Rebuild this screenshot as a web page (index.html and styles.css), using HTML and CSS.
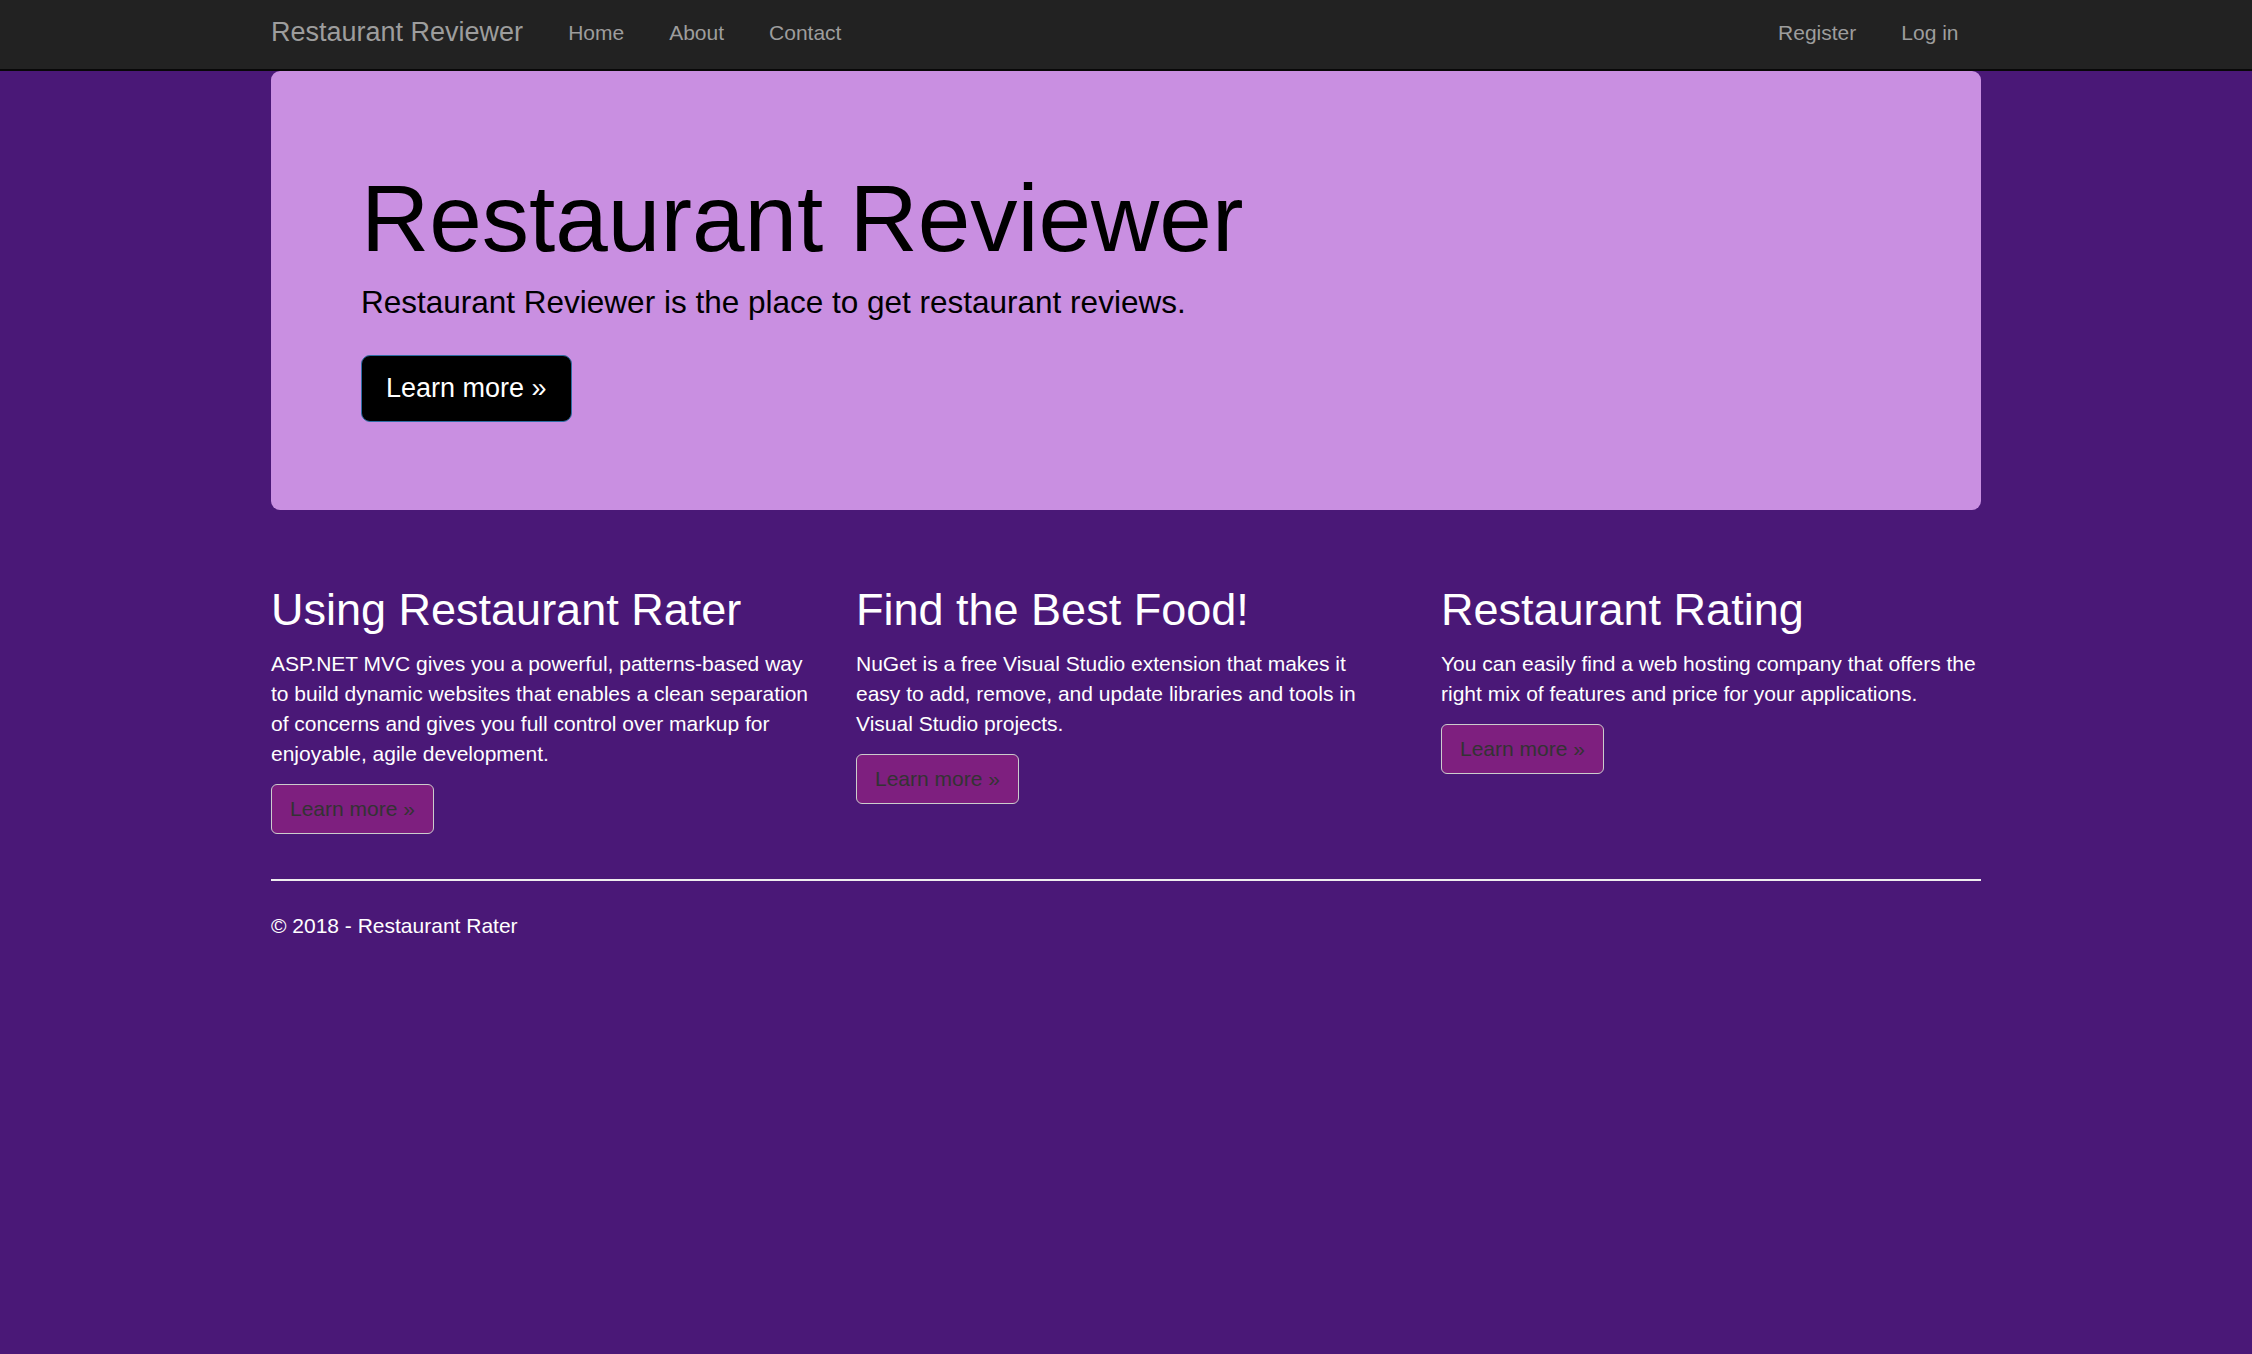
FILE: index.html
```html
<!DOCTYPE html>
<html lang="en">
<head>
<meta charset="utf-8">
<title>Home Page - Restaurant Reviewer</title>
<link rel="stylesheet" href="styles.css">
</head>
<body>
<nav class="navbar">
  <div class="nav-inner">
    <a class="brand" href="#">Restaurant Reviewer</a>
    <ul class="nav-list">
      <li><a href="#">Home</a></li>
      <li><a href="#">About</a></li>
      <li><a href="#">Contact</a></li>
    </ul>
    <ul class="nav-list nav-right">
      <li><a href="#">Register</a></li>
      <li><a href="#">Log in</a></li>
    </ul>
  </div>
</nav>
<div class="container">
  <section class="jumbotron">
    <h1>Restaurant Reviewer</h1>
    <p class="lead">Restaurant Reviewer is the place to get restaurant reviews.</p>
    <div class="actions"><a class="btn-lg" href="#">Learn more &raquo;</a></div>
  </section>
  <div class="row">
    <div class="col">
      <h2>Using Restaurant Rater</h2>
      <p>ASP.NET MVC gives you a powerful, patterns-based way to build dynamic websites that enables a clean separation of concerns and gives you full control over markup for enjoyable, agile development.</p>
      <p class="btn-row"><a class="btn" href="#">Learn more &raquo;</a></p>
    </div>
    <div class="col">
      <h2>Find the Best Food!</h2>
      <p>NuGet is a free Visual Studio extension that makes it easy to add, remove, and update libraries and tools in Visual Studio projects.</p>
      <p class="btn-row"><a class="btn" href="#">Learn more &raquo;</a></p>
    </div>
    <div class="col">
      <h2>Restaurant Rating</h2>
      <p>You can easily find a web hosting company that offers the right mix of features and price for your applications.</p>
      <p class="btn-row"><a class="btn" href="#">Learn more &raquo;</a></p>
    </div>
  </div>
  <hr class="divider">
  <footer class="footer">
    <p>&copy; 2018 - Restaurant Rater</p>
  </footer>
</div>
</body>
</html>
```

FILE: styles.css
```css
* { box-sizing: border-box; }

html, body {
  margin: 0;
  padding: 0;
}

body {
  background: #4a1877;
  color: #ffffff;
  font-family: "Liberation Sans", Arial, sans-serif;
  font-size: 21px;
  line-height: 30px;
  min-height: 1354px;
}

a { text-decoration: none; }

.navbar {
  background: #222222;
  height: 71px;
  border-bottom: 2px solid #080808;
}

.nav-inner {
  width: 1710px;
  margin: 0 auto;
  display: flex;
  align-items: flex-start;
  padding-top: 17px;
}

.brand {
  color: #9d9d9d;
  font-size: 27px;
  line-height: 30px;
  padding-right: 22.5px;
}

.nav-list {
  list-style: none;
  margin: 0;
  padding: 0;
  display: flex;
}

.nav-list a {
  display: block;
  color: #9d9d9d;
  font-size: 21px;
  line-height: 30px;
  padding: 1px 22.5px 0;
}

.nav-right {
  margin-left: auto;
}

.container {
  width: 1710px;
  margin: 0 auto;
}

.jumbotron {
  background: #c98fe1;
  color: #000000;
  border-radius: 9px;
  padding: 95px 90px 88px;
}

.jumbotron h1 {
  margin: 0 0 10px;
  font-size: 94.5px;
  line-height: 104px;
  font-weight: normal;
}

.jumbotron .lead {
  margin: 0;
  font-size: 31.5px;
  line-height: 45px;
}

.actions {
  display: flex;
  margin-top: 30px;
}

.btn-lg {
  display: block;
  background: #000000;
  color: #ffffff;
  border: 1.5px solid #2e6da4;
  border-radius: 9px;
  font-size: 27px;
  line-height: 35px;
  padding: 15px 24px;
}

.row {
  display: grid;
  grid-template-columns: repeat(3, 1fr);
  column-gap: 45px;
  margin-top: 45px;
}

.col h2 {
  margin: 30px 0 14px;
  font-size: 45px;
  line-height: 49.5px;
  font-weight: normal;
  color: #ffffff;
}

.col p {
  margin: 0 0 15px;
}

.btn-row {
  display: flex;
}

.btn {
  display: block;
  background: #7e1f7f;
  color: #333333;
  border: 1.5px solid #cccccc;
  border-radius: 6px;
  font-size: 21px;
  line-height: 30px;
  padding: 9px 18px;
}

.divider {
  margin: 30px 0 30px;
  border: 0;
  border-top: 2px solid #eeeeee;
  height: 0;
}

.footer p {
  margin: 0 0 15px;
}
```
